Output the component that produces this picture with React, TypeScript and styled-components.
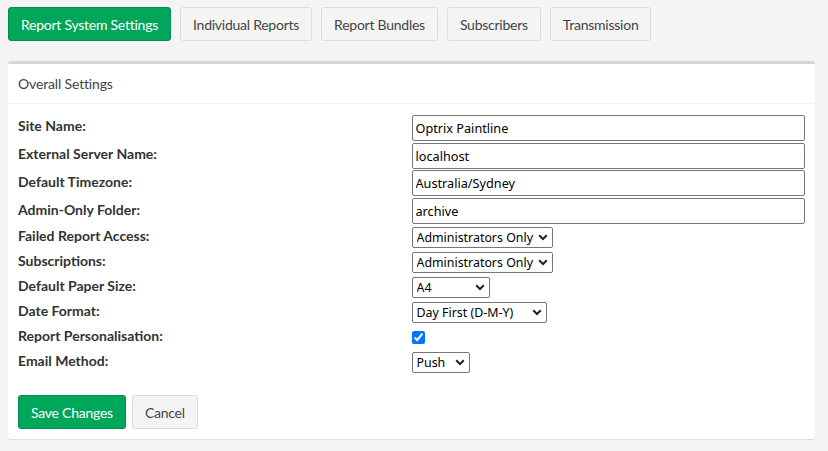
import React from "react";
import styled, { createGlobalStyle } from "styled-components";

const GlobalStyle = createGlobalStyle`
  html, body {
    margin: 0;
    padding: 0;
    background: #f4f4f4;
  }
  body {
    font-family: "Lato", "Liberation Sans", sans-serif;
    font-size: 14px;
    color: #333;
  }
`;

const Page = styled.div`
  padding: 7px 13px 12px 8px;
`;

const TabBar = styled.div`
  display: flex;
  gap: 9px;
  margin-bottom: 20px;
`;

const Button = styled.button<{ primary?: boolean }>`
  height: 34px;
  padding: 0 12px;
  font-family: "Lato", "Liberation Sans", sans-serif;
  font-size: 14px;
  letter-spacing: -0.25px;
  border-radius: 3px;
  border: 1px solid ${({ primary }) => (primary ? "#008d4c" : "#ddd")};
  background: ${({ primary }) => (primary ? "#00a65a" : "#f4f4f4")};
  color: ${({ primary }) => (primary ? "#fff" : "#444")};
  cursor: pointer;
`;

const Card = styled.div`
  background: #fff;
  border-top: 3px solid #d2d6de;
  border-radius: 3px;
  box-shadow: 0 1px 1px rgba(0, 0, 0, 0.1);
`;

const CardHeader = styled.div`
  height: 40px;
  padding: 0 10px 1px;
  box-sizing: border-box;
  display: flex;
  align-items: center;
  border-bottom: 1px solid #f4f4f4;
  color: #444;
  font-size: 14px;
  letter-spacing: -0.15px;
`;

const CardBody = styled.div`
  padding: 10px 10px 10px;
`;

const Form = styled.div`
  display: grid;
  grid-template-columns: 1fr 1fr;
  align-items: center;
`;

const Label = styled.div`
  font-weight: 700;
  color: #333;
  padding-bottom: 4px;
`;

const Cell = styled.div<{ h: number }>`
  height: ${({ h }) => h}px;
  display: flex;
  align-items: center;
`;

const TextInput = styled.input`
  box-sizing: border-box;
  width: 100%;
  height: 26px;
  padding: 1px 3px;
  border: 1px solid #767676;
  border-radius: 2px;
  font-family: "Noto Sans", "Open Sans", sans-serif;
  font-size: 12.7px;
  color: #000;
  background: #fff;
`;

const SelectWrap = styled.div<{ w: number }>`
  position: relative;
  width: ${({ w }) => w}px;
  height: 21px;

  svg {
    position: absolute;
    right: 5px;
    top: 7px;
    pointer-events: none;
  }
`;

const Select = styled.select`
  appearance: none;
  box-sizing: border-box;
  width: 100%;
  height: 21px;
  padding: 0 0 0 4px;
  border: 1px solid #767676;
  border-radius: 2px;
  background: #fff;
  font-family: "Noto Sans", "Open Sans", sans-serif;
  font-size: 12.4px;
  color: #000;
`;

const Check = styled.input`
  margin: 0;
  width: 13px;
  height: 13px;
  accent-color: #0075ff;
`;

const Actions = styled.div`
  display: flex;
  gap: 6px;
  margin-top: 20px;
`;

const Chevron = () => (
  <svg width="10" height="7" viewBox="0 0 10 7">
    <path d="M1.2 1.2 L5 5 L8.8 1.2" fill="none" stroke="#222" strokeWidth="2" />
  </svg>
);

type Field =
  | { label: string; kind: "text"; value: string }
  | { label: string; kind: "select"; value: string; width: number }
  | { label: string; kind: "check" };

const fields: Field[] = [
  { label: "Site Name:", kind: "text", value: "Optrix Paintline" },
  { label: "External Server Name:", kind: "text", value: "localhost" },
  { label: "Default Timezone:", kind: "text", value: "Australia/Sydney" },
  { label: "Admin-Only Folder:", kind: "text", value: "archive" },
  { label: "Failed Report Access:", kind: "select", value: "Administrators Only", width: 141 },
  { label: "Subscriptions:", kind: "select", value: "Administrators Only", width: 141 },
  { label: "Default Paper Size:", kind: "select", value: "A4", width: 78 },
  { label: "Date Format:", kind: "select", value: "Day First (D-M-Y)", width: 135 },
  { label: "Report Personalisation:", kind: "check" },
  { label: "Email Method:", kind: "select", value: "Push", width: 58 },
];

const tabs = [
  "Report System Settings",
  "Individual Reports",
  "Report Bundles",
  "Subscribers",
  "Transmission",
];

export default function App() {
  return (
    <>
      <GlobalStyle />
      <Page>
        <TabBar>
          {tabs.map((t, i) => (
            <Button key={t} primary={i === 0}>
              {t}
            </Button>
          ))}
        </TabBar>
        <Card>
          <CardHeader>Overall Settings</CardHeader>
          <CardBody>
            <Form>
              {fields.map((f) => {
                const h = f.kind === "text" ? 27.75 : 25;
                return (
                  <React.Fragment key={f.label}>
                    <Cell h={h}>
                      <Label>{f.label}</Label>
                    </Cell>
                    <Cell h={h}>
                      {f.kind === "text" && (
                        <TextInput defaultValue={f.value} />
                      )}
                      {f.kind === "select" && (
                        <SelectWrap w={f.width}>
                          <Select defaultValue={f.value}>
                            <option>{f.value}</option>
                          </Select>
                          <Chevron />
                        </SelectWrap>
                      )}
                      {f.kind === "check" && <Check type="checkbox" defaultChecked />}
                    </Cell>
                  </React.Fragment>
                );
              })}
            </Form>
            <Actions>
              <Button primary>Save Changes</Button>
              <Button>Cancel</Button>
            </Actions>
          </CardBody>
        </Card>
      </Page>
    </>
  );
}
